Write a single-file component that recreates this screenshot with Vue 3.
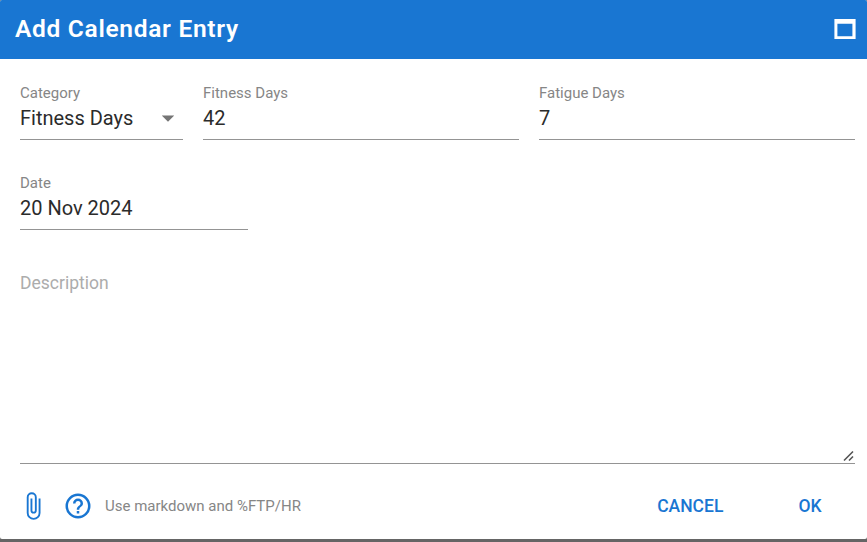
<template>
    <div class="dialog-card">
        <header class="toolbar">
            <h1 class="title">Add Calendar Entry</h1>
            <button class="btn-icon btn-maximize" aria-label="Maximize">
                <svg width="22" height="20" viewBox="0 0 22 20">
                    <path fill-rule="evenodd" d="M.4,0H21.6V20H.4V0M3.4,4.8V17.2H18.4V4.8H3.4Z"/>
                </svg>
            </button>
        </header>

        <div class="form">
            <div class="row">
                <div class="field category">
                    <label>Category</label>
                    <div class="value">
                        {{ entry.category }}
                        <svg class="caret" viewBox="0 0 24 24">
                            <path d="M7,10L12,15L17,10H7Z"/>
                        </svg>
                    </div>
                </div>
                <div v-for="field in dayFields" :key="field.key" class="field">
                    <label>{{ field.label }}</label>
                    <input v-model="entry[field.key]" :aria-label="field.label">
                </div>
            </div>

            <div class="row">
                <div class="field date">
                    <label>Date</label>
                    <input v-model="entry.date" aria-label="Date">
                </div>
            </div>

            <div class="description">
                <textarea v-model="entry.description" placeholder="Description"></textarea>
                <svg class="grip" width="12" height="12" viewBox="0 0 12 12">
                    <path d="M1,10.5L10,1.5M6,10.5L10,6.5"/>
                </svg>
            </div>
        </div>

        <footer class="actions">
            <button class="btn-icon" aria-label="Attach file">
                <svg viewBox="0 0 24 24">
                    <path d="M16.5,6V17.5A4,4 0 0,1 12.5,21.5A4,4 0 0,1 8.5,17.5V5A2.5,2.5 0 0,1 11,2.5A2.5,2.5 0 0,1 13.5,5V15.5A1,1 0 0,1 12.5,16.5A1,1 0 0,1 11.5,15.5V6H10V15.5A2.5,2.5 0 0,0 12.5,18A2.5,2.5 0 0,0 15,15.5V5A4,4 0 0,0 11,1A4,4 0 0,0 7,5V17.5A5.5,5.5 0 0,0 12.5,23A5.5,5.5 0 0,0 18,17.5V6H16.5Z"/>
                </svg>
            </button>
            <button class="btn-icon btn-help" aria-label="Help">
                <svg viewBox="0 0 24 24">
                    <path d="M11,18H13V16H11V18M12,2A10,10 0 0,0 2,12A10,10 0 0,0 12,22A10,10 0 0,0 22,12A10,10 0 0,0 12,2M12,20C7.59,20 4,16.41 4,12C4,7.59 7.59,4 12,4C16.41,4 20,7.59 20,12C20,16.41 16.41,20 12,20M12,6A4,4 0 0,0 8,10H10A2,2 0 0,1 12,8A2,2 0 0,1 14,10C14,12 11,11.75 11,15H13C13,12.75 16,12.5 16,10A4,4 0 0,0 12,6Z"/>
                </svg>
            </button>
            <span class="hint">Use markdown and %FTP/HR</span>
            <button class="btn-text cancel">Cancel</button>
            <button class="btn-text ok">OK</button>
        </footer>
    </div>
</template>

<script setup>

import {reactive} from "vue";

const dayFields = [
    {key: 'fitnessDays', label: 'Fitness Days'},
    {key: 'fatigueDays', label: 'Fatigue Days'},
];

const entry = reactive({
    category: 'Fitness Days',
    fitnessDays: '42',
    fatigueDays: '7',
    date: '20 Nov 2024',
    description: '',
});
</script>

<style>
body {
    background: #656565;
    overflow: hidden;
}
</style>

<style scoped>
.dialog-card {
    box-sizing: border-box;
    height: 539px;
    display: flex;
    flex-direction: column;
    background: #fff;
    border-radius: 2px;
    overflow: hidden;
    font-family: Roboto, sans-serif;
    color: #2b2b2b;
}

.toolbar {
    display: flex;
    align-items: center;
    justify-content: space-between;
    box-sizing: border-box;
    height: 59px;
    padding: 0 11px 1px 15px;
    background: #1976d2;
    color: #fff;
}

.title {
    margin: 0;
    font-size: 24.5px;
    line-height: 32px;
    font-weight: 600;
    letter-spacing: 0.7px;
}

.form {
    padding: 25px 12px 0 20px;
}

.row {
    display: flex;
    gap: 20px;
    height: 90px;
}

.field {
    flex: 1;
    height: 56px;
    box-sizing: border-box;
    border-bottom: 1px solid #949494;
}

.category {
    flex: 0 0 163px;
}

.date {
    flex: 0 0 228px;
}

label {
    display: block;
    height: 18px;
    font-size: 15px;
    line-height: 18px;
    color: #868686;
}

.value,
input {
    display: flex;
    align-items: center;
    justify-content: space-between;
    width: 100%;
    height: 32px;
    padding: 0;
    border: none;
    outline: none;
    background: none;
    font: 400 20px/32px Roboto, sans-serif;
    color: inherit;
}

.caret {
    width: 30px;
    height: 30px;
    fill: #757575;
}

.description {
    position: relative;
    height: 199px;
    border-bottom: 1px solid #949494;
}

textarea {
    display: block;
    box-sizing: border-box;
    width: 100%;
    height: 198px;
    padding: 3px 0;
    border: none;
    outline: none;
    resize: none;
    background: none;
    font: 400 17.5px/32px Roboto, sans-serif;
    color: inherit;
}

textarea::placeholder {
    color: #acacac;
}

.grip {
    position: absolute;
    right: 0;
    bottom: 1px;
    fill: none;
    stroke: #555;
    stroke-width: 1.6;
}

.actions {
    display: flex;
    align-items: center;
    height: 60px;
    margin-top: 12px;
    padding: 0 17.5px;
}

.btn-icon {
    display: flex;
    padding: 0;
    border: none;
    background: none;
    color: #1976d2;
    cursor: pointer;
}

.btn-icon svg {
    width: 30px;
    height: 30px;
    fill: currentColor;
}

.btn-maximize {
    color: #fff;
}

.btn-maximize svg {
    width: 22px;
    height: 20px;
}

.btn-help {
    margin-left: 15px;
}

.hint {
    margin-left: 12.5px;
    font-size: 15px;
    color: #868686;
}

.btn-text {
    padding: 0;
    border: none;
    background: none;
    font: 500 17.5px/24px Roboto, sans-serif;
    text-transform: uppercase;
    color: #1976d2;
    cursor: pointer;
}

.cancel {
    margin-left: auto;
}

.ok {
    margin-left: 75px;
    margin-right: 28px;
}
</style>
